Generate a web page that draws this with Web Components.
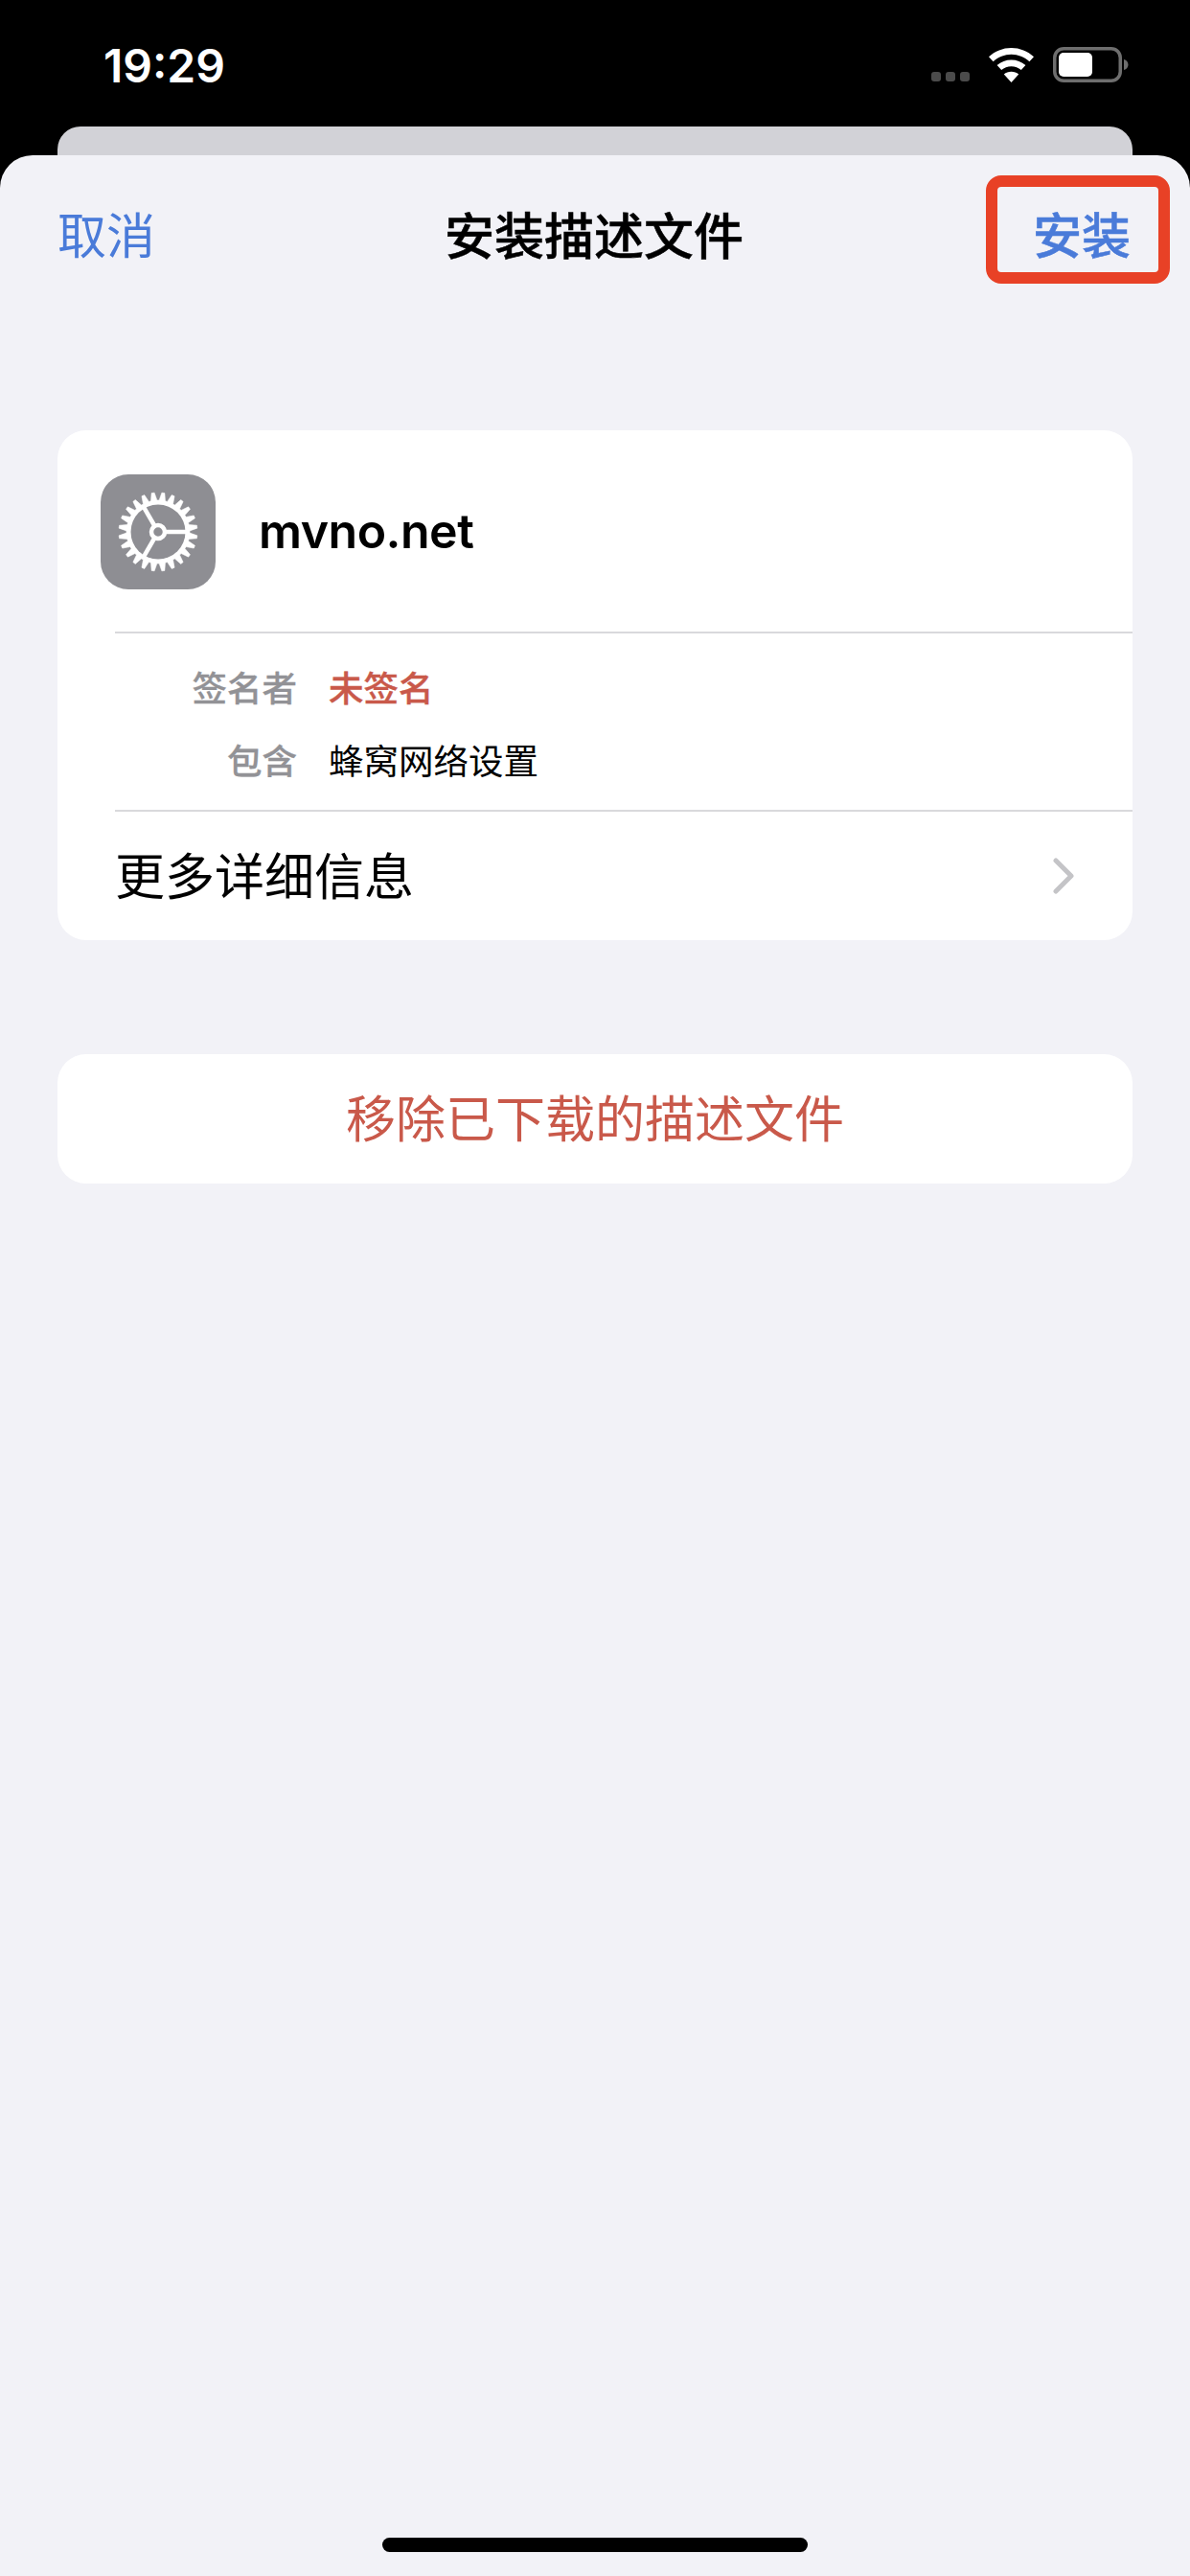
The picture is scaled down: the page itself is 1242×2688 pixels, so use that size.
<!DOCTYPE html>
<html lang="zh-CN">
<head>
<meta charset="utf-8">
<title>安装描述文件</title>
<style>
html,body{margin:0;padding:0;background:#000}
body{font-family:"Noto Sans CJK SC","Inter",sans-serif}
</style>
</head>
<body>
<app-shell>
  <status-bar slot="status" time="19:29"></status-bar>
  <nav-bar cancel="取消" title-text="安装描述文件" action="安装"></nav-bar>
  <profile-card name="mvno.net" more="更多详细信息">
    <info-row label="签名者" tone="danger" value="未签名"></info-row>
    <info-row label="包含" value="蜂窝网络设置"></info-row>
  </profile-card>
  <action-button>移除已下载的描述文件</action-button>
</app-shell>
<script>
const CJK = '"Noto Sans CJK SC","Inter",sans-serif';

class AppShell extends HTMLElement{
  constructor(){
    super();
    this.attachShadow({mode:'open'}).innerHTML=`
    <style>
      :host{display:flex;flex-direction:column;width:1242px;height:2688px;background:#000;overflow:hidden;font-family:${CJK}}
      .behind{height:30px;margin:0 60px;background:#d2d2d7;border-radius:24px 24px 0 0;flex:none}
      .sheet{flex:1;display:flex;flex-direction:column;background:#f2f2f7;border-radius:34px 34px 0 0}
      .home{margin-top:auto;align-self:center;width:444px;height:15px;border-radius:8px;background:#000;margin-bottom:25px}
    </style>
    <slot name="status"></slot>
    <div class="behind"></div>
    <div class="sheet"><slot></slot><div class="home"></div></div>`;
  }
}

class StatusBar extends HTMLElement{
  constructor(){
    super();
    this.attachShadow({mode:'open'}).innerHTML=`
    <style>
      :host{display:flex;align-items:flex-start;justify-content:space-between;height:132px;padding:0 64px 0 108px;box-sizing:border-box;color:#fff;flex:none}
      .time{font:600 48px/1 "Inter",sans-serif;margin-top:45px}
      .right{display:flex;align-items:flex-start;margin-top:49px}
      .dots{display:flex;gap:5px;margin:26px 20px 0 0}
      .dots i{width:10px;height:10px;border-radius:3px;background:#4b4b4b}
      svg{display:block}
      .batt{margin-left:20px}
    </style>
    <span class="time"></span>
    <div class="right">
      <div class="dots"><i></i><i></i><i></i></div>
      <svg width="47" height="36" viewBox="0 0 47 36" style="margin-top:1px">
        <path d="M23.5 0C14.6 0 6.5 3.4 0 9.2l4.6 5C9.9 9.6 16.4 6.8 23.5 6.8s13.6 2.8 18.9 7.4l4.6-5C40.5 3.4 32.4 0 23.5 0z" fill="#fff"/>
        <path d="M23.5 12.4c-5.600 0-10.700 2-14.900 5.600l4.600 5c2.900-2.300 6.400-3.700 10.300-3.700s7.400 1.400 10.300 3.700l4.600-5c-4.200-3.600-9.300-5.600-14.900-5.600z" fill="#fff"/>
        <path d="M23.5 24.8c-3 0-5.600 1-7.700 2.800l7.700 8.400 7.700-8.400c-2.100-1.800-4.700-2.800-7.700-2.800z" fill="#fff"/>
      </svg>
      <svg class="batt" width="79" height="37" viewBox="0 0 79 37">
        <rect x="1.75" y="1.75" width="68.5" height="33.5" rx="9.5" fill="none" stroke="#6e6e6e" stroke-width="3.5"/>
        <rect x="6" y="6" width="35" height="25" rx="5" fill="#fff"/>
        <path d="M74 13c2.8.8 4.5 3 4.5 5.5S76.800 23.200 74 24z" fill="#6e6e6e"/>
      </svg>
    </div>`;
    this.shadowRoot.querySelector('.time').textContent=this.getAttribute('time');
  }
}

class NavBar extends HTMLElement{
  constructor(){
    super();
    this.attachShadow({mode:'open'}).innerHTML=`
    <style>
      :host{display:grid;grid-template-columns:1fr auto 1fr;align-items:center;height:168px;padding:0 62px 0 60px;box-sizing:border-box;position:relative;font-size:51px;line-height:1;font-family:${CJK}}
      span{padding-bottom:5px}
      .cancel{color:#4a7bd9;justify-self:start}
      .title{color:#000;font-weight:500;font-size:52px;-webkit-text-stroke:.5px #000}
      .action{color:#4a7bd9;font-weight:500;justify-self:end;-webkit-text-stroke:.5px #4a7bd9}
      .mark{position:absolute;left:1029px;top:21px;width:192px;height:113px;box-sizing:border-box;border:12px solid #e84126;border-radius:16px}
    </style>
    <span class="cancel"></span><span class="title"></span><span class="action"></span>
    <div class="mark" aria-hidden="true"></div>`;
    const s=this.shadowRoot;
    s.querySelector('.cancel').textContent=this.getAttribute('cancel');
    s.querySelector('.title').textContent=this.getAttribute('title-text');
    s.querySelector('.action').textContent=this.getAttribute('action');
  }
}

class GearIcon extends HTMLElement{
  constructor(){
    super();
    const n=24,cx=60,cy=60,rb=33,rt=41;
    let d='';
    const pt=(r,a)=>`${(cx+r*Math.cos(a)).toFixed(2)} ${(cy+r*Math.sin(a)).toFixed(2)}`;
    for(let i=0;i<n;i++){
      const w=2*Math.PI/n, a=i*w+w/2;
      d+=(i?'L':'M')+pt(rb,a-w*.37)+'L'+pt(rt,a-w*.14)+'L'+pt(rt,a+w*.14)+'L'+pt(rb,a+w*.37);
    }
    d+='Z';
    const sp=[0,-120,120].map(g=>{
      const r=g*Math.PI/180;
      return `<line x1="60" y1="60" x2="${(60+30*Math.cos(r)).toFixed(2)}" y2="${(60+30*Math.sin(r)).toFixed(2)}"/>`;
    }).join('');
    this.attachShadow({mode:'open'}).innerHTML=`
    <style>
      :host{display:block;width:120px;height:120px;flex:none;margin-top:2px}
      svg{display:block;border-radius:29px;background:#8e8e93}
    </style>
    <svg width="120" height="120" viewBox="0 0 120 120">
      <path d="${d}" fill="#fff" stroke="#fff" stroke-width=".6" stroke-linejoin="round"/>
      <circle cx="60" cy="60" r="28.500" fill="#8e8e93"/>
      <g stroke="#fff" stroke-width="4.500">${sp}</g>
      <circle cx="60" cy="60" r="7" fill="#8e8e93" stroke="#fff" stroke-width="4.500"/>
    </svg>`;
  }
}

class InfoRow extends HTMLElement{
  constructor(){
    super();
    this.attachShadow({mode:'open'}).innerHTML=`
    <style>
      :host{display:grid;grid-template-columns:250px 1fr;column-gap:33px;height:76px;align-items:center;font-size:36.5px;line-height:1;font-family:${CJK}}
      span{padding-bottom:3px}
      .l{color:#929296;text-align:right;font-weight:500;-webkit-text-stroke:.3px #929296}
      .v{color:#000}
      :host([tone=danger]) .v{color:#c9594a;font-weight:500;-webkit-text-stroke:.4px #c9594a}
    </style>
    <span class="l"></span><span class="v"></span>`;
    this.shadowRoot.querySelector('.l').textContent=this.getAttribute('label');
    this.shadowRoot.querySelector('.v').textContent=this.getAttribute('value');
  }
}

class ProfileCard extends HTMLElement{
  constructor(){
    super();
    this.attachShadow({mode:'open'}).innerHTML=`
    <style>
      :host{display:block;margin:119px 60px 0;background:#fff;border-radius:30px;overflow:hidden;font-family:${CJK}}
      .head{display:flex;align-items:center;gap:45px;height:210px;padding-left:45px;box-sizing:border-box}
      .name{font:600 50px/1 "Inter",sans-serif;color:#000;letter-spacing:-.5px}
      .sep{height:2px;margin-left:60px;background:#d9d9dc}
      .info{padding:20px 0 12px}
      .more{display:flex;align-items:center;justify-content:space-between;height:134px;padding:0 60px 0 60px;box-sizing:border-box;font-size:52px;line-height:1;color:#000}
      .m{padding-bottom:5px}
      svg{display:block}
    </style>
    <div class="head"><gear-icon></gear-icon><span class="name"></span></div>
    <div class="sep"></div>
    <div class="info"><slot></slot></div>
    <div class="sep"></div>
    <div class="more"><span class="m"></span>
      <svg width="24" height="38" viewBox="0 0 24 38"><path d="M4 3l16 16L4 35" fill="none" stroke="#c4c4c7" stroke-width="5" stroke-linecap="round" stroke-linejoin="round"/></svg>
    </div>`;
    this.shadowRoot.querySelector('.name').textContent=this.getAttribute('name');
    this.shadowRoot.querySelector('.m').textContent=this.getAttribute('more');
  }
}

class ActionButton extends HTMLElement{
  constructor(){
    super();
    this.attachShadow({mode:'open'}).innerHTML=`
    <style>
      :host{display:flex;align-items:center;justify-content:center;height:135px;margin:119px 60px 0;padding-bottom:5px;box-sizing:border-box;background:#fff;border-radius:30px;color:#c9594a;font-size:52px;line-height:1;font-family:${CJK}}
    </style><slot></slot>`;
  }
}

customElements.define('app-shell',AppShell);
customElements.define('status-bar',StatusBar);
customElements.define('nav-bar',NavBar);
customElements.define('gear-icon',GearIcon);
customElements.define('info-row',InfoRow);
customElements.define('profile-card',ProfileCard);
customElements.define('action-button',ActionButton);
</script>
</body>
</html>
